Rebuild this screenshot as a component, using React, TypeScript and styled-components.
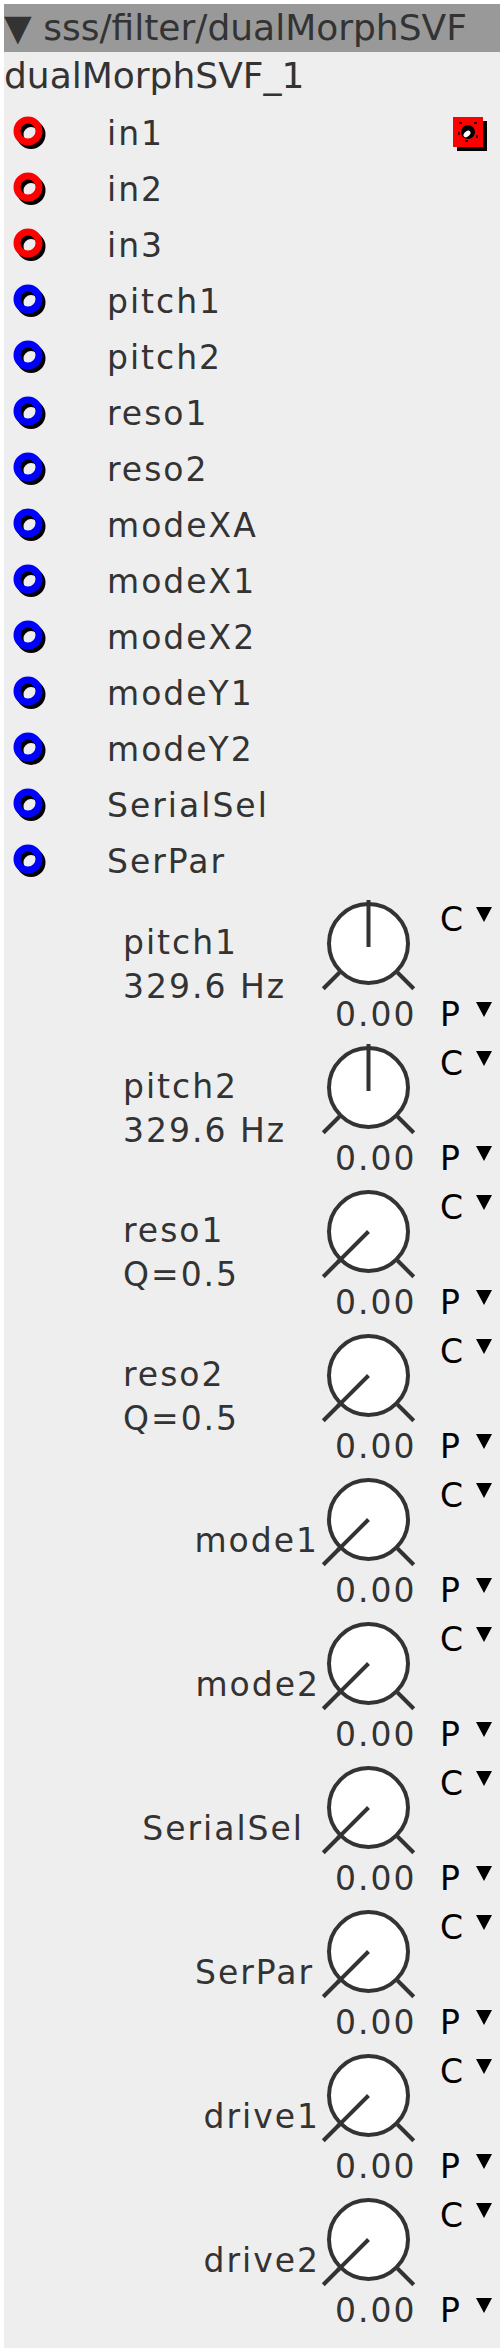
import styled, { createGlobalStyle } from "styled-components";

const GlobalStyle = createGlobalStyle`
  body {
    margin: 0;
    background: #ffffff;
    font-family: "DejaVu Sans", "Liberation Sans", sans-serif;
  }
`;

type Port = { name: string; kind: "audio" | "control" };

const ports: Port[] = [
  { name: "in1", kind: "audio" },
  { name: "in2", kind: "audio" },
  { name: "in3", kind: "audio" },
  { name: "pitch1", kind: "control" },
  { name: "pitch2", kind: "control" },
  { name: "reso1", kind: "control" },
  { name: "reso2", kind: "control" },
  { name: "modeXA", kind: "control" },
  { name: "modeX1", kind: "control" },
  { name: "modeX2", kind: "control" },
  { name: "modeY1", kind: "control" },
  { name: "modeY2", kind: "control" },
  { name: "SerialSel", kind: "control" },
  { name: "SerPar", kind: "control" },
];

// inset: how far the single-line label stops short of the knob
type Param = { lines: string[]; bipolar?: boolean; inset?: number };

const params: Param[] = [
  { lines: ["pitch1", "329.6 Hz"], bipolar: true },
  { lines: ["pitch2", "329.6 Hz"], bipolar: true },
  { lines: ["reso1", "Q=0.5"] },
  { lines: ["reso2", "Q=0.5"] },
  { lines: ["mode1"], inset: 1 },
  { lines: ["mode2"] },
  { lines: ["SerialSel"], inset: 16 },
  { lines: ["SerPar"], inset: 6 },
  { lines: ["drive1"] },
  { lines: ["drive2"] },
];

const Jack = ({ color }: { color: string }) => (
  <svg width="40" height="40" viewBox="0 0 40 40">
    <circle cx="19" cy="19.5" r="11" fill="none" stroke="#000" strokeWidth="7" />
    <circle cx="16" cy="16" r="11" fill="none" stroke={color} strokeWidth="7" />
  </svg>
);

const Outlet = () => (
  <svg width="38" height="38" viewBox="0 0 38 38">
    <rect x="4" y="4" width="30" height="30" fill="#000" />
    <rect x="0" y="0" width="30" height="30" fill="#ff0000" />
    <rect x="6" y="6" width="18" height="18" fill="none" stroke="#000" strokeWidth="1.5" strokeDasharray="3 12" />
    <circle cx="15" cy="15" r="7" fill="#000" />
    <ellipse cx="14" cy="17" rx="4" ry="2.5" fill="#fff" transform="rotate(-40 14 17)" />
  </svg>
);

const Knob = ({ bipolar }: { bipolar?: boolean }) => {
  const cx = 48.5;
  const cy = 56.5;
  const d = Math.SQRT1_2;
  const end = bipolar
    ? { x1: cx, y1: cy + 3.5, x2: cx, y2: cy - 43.5 }
    : { x1: cx, y1: cy, x2: cx - 44 * d, y2: cy + 44 * d };
  return (
    <svg width="96" height="110" viewBox="0 0 96 110">
      <circle cx={cx} cy={cy} r="39.5" fill="#fff" stroke="#333" strokeWidth="4" />
      <line x1={cx - 41 * d} y1={cy + 41 * d} x2={cx - 64 * d} y2={cy + 64 * d} stroke="#333" strokeWidth="4" />
      <line x1={cx + 41 * d} y1={cy + 41 * d} x2={cx + 64 * d} y2={cy + 64 * d} stroke="#333" strokeWidth="4" />
      <line {...end} stroke="#333" strokeWidth="4" />
    </svg>
  );
};

export default function App() {
  return (
    <>
      <GlobalStyle />
      <Panel>
        <TitleBar>▼ sss/filter/dualMorphSVF</TitleBar>
        <InstanceName>dualMorphSVF_1</InstanceName>
        {ports.map((p, i) => (
          <PortRow key={p.name}>
            <JackCell>
              <Jack color={p.kind === "audio" ? "#ff0000" : "#0000ff"} />
            </JackCell>
            <PortLabel>{p.name}</PortLabel>
            {i === 0 && (
              <OutletCell>
                <Outlet />
              </OutletCell>
            )}
          </PortRow>
        ))}
        {params.map((p) => (
          <ParamRow key={p.lines[0]}>
            <LabelArea $multi={p.lines.length > 1} $inset={p.inset ?? 0}>
              {p.lines.map((l) => (
                <LabelLine key={l}>{l}</LabelLine>
              ))}
            </LabelArea>
            <KnobCol>
              <Knob bipolar={p.bipolar} />
              <Value>0.00</Value>
            </KnobCol>
            <SideCol>
              <Drop>
                <DropLetter>C</DropLetter>
                <Arrow />
              </Drop>
              <Drop>
                <DropLetter>P</DropLetter>
                <Arrow />
              </Drop>
            </SideCol>
          </ParamRow>
        ))}
      </Panel>
    </>
  );
}

const Panel = styled.div`
  margin: 4px;
  width: 496px;
  padding-bottom: 21px;
  background: #eeeeee;
  color: #333333;
`;

const TitleBar = styled.div`
  height: 48px;
  line-height: 48px;
  background: #999999;
  font-size: 36px;
  white-space: nowrap;
  overflow: hidden;
`;

const InstanceName = styled.div`
  height: 51px;
  line-height: 47px;
  font-size: 36px;
`;

const PortRow = styled.div`
  display: flex;
  height: 56px;
`;

const JackCell = styled.div`
  width: 95px;
  padding: 12px 0 0 8px;
`;

const PortLabel = styled.div`
  padding-top: 3px;
  line-height: 56px;
  font-size: 33px;
  letter-spacing: 2px;
`;

const OutletCell = styled.div`
  margin-left: auto;
  padding: 14px 9px 0 0;
`;

const ParamRow = styled.div`
  display: flex;
  height: 144px;
`;

const LabelArea = styled.div<{ $multi: boolean; $inset: number }>`
  width: 316px;
  display: flex;
  flex-direction: column;
  justify-content: center;
  align-items: ${({ $multi }) => ($multi ? "flex-start" : "flex-end")};
  padding-top: 12px;
  padding-left: ${({ $multi }) => ($multi ? "119px" : "0")};
  padding-right: ${({ $inset }) => $inset}px;
  box-sizing: border-box;
`;

const LabelLine = styled.div`
  font-size: 33px;
  line-height: 44px;
  letter-spacing: 2px;
  white-space: nowrap;
`;

const KnobCol = styled.div`
  width: 96px;
  display: flex;
  flex-direction: column;
`;

const Value = styled.div`
  margin-top: auto;
  padding-left: 15px;
  font-size: 33px;
  line-height: 32px;
  letter-spacing: 2px;
  white-space: nowrap;
`;

const SideCol = styled.div`
  flex: 1;
  display: flex;
  flex-direction: column;
  justify-content: space-between;
  padding: 17px 0 0 24px;
`;

const Drop = styled.div`
  display: flex;
  align-items: flex-start;
  height: 32px;
`;

const DropLetter = styled.span`
  width: 36px;
  font-size: 33px;
  line-height: 32px;
  color: #000000;
`;

const Arrow = styled.span`
  margin-top: 3px;
  width: 0;
  height: 0;
  border-left: 8px solid transparent;
  border-right: 8px solid transparent;
  border-top: 15px solid #000000;
`;
